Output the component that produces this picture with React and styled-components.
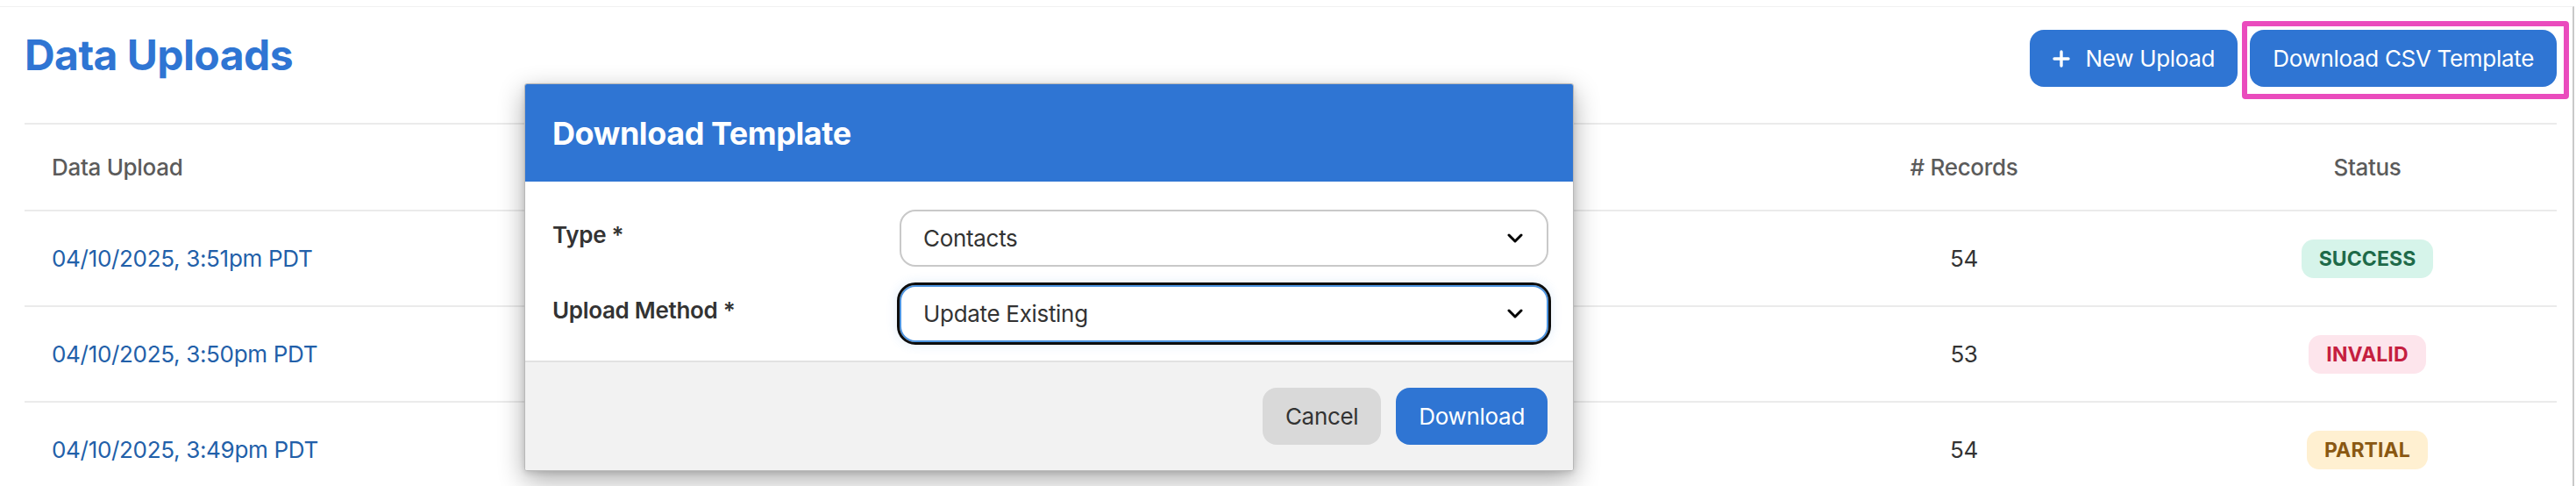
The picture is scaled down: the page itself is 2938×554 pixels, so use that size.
import React from "react";
import styled, { createGlobalStyle, css } from "styled-components";

const GlobalStyle = createGlobalStyle`
  html, body {
    margin: 0;
    padding: 0;
    background: #ffffff;
  }
  body {
    font-family: Inter, "Noto Sans", "Liberation Sans", sans-serif;
    -webkit-font-smoothing: antialiased;
  }
  *, *::before, *::after { box-sizing: border-box; }
`;

const BLUE = "#2f75d3";
const TRACK = "-0.012em";

const Page = styled.div`
  position: relative;
  width: 2938px;
  height: 554px;
  overflow: hidden;
`;

const Panel = styled.main`
  margin-top: 7px;
  width: 2936px;
  min-height: 547px;
  border-top: 1px solid #f1f1f1;
  border-right: 2px solid #c9c9c9;
  padding: 26px 18px 0 28px;
`;

const Header = styled.header`
  display: flex;
  align-items: center;
  justify-content: space-between;
  height: 65px;
`;

const Title = styled.h1`
  margin: 0 0 8px 0;
  font-size: 48px;
  line-height: 1;
  font-weight: 700;
  letter-spacing: ${TRACK};
  color: ${BLUE};
`;

const Actions = styled.div`
  display: flex;
  gap: 14px;
`;

const Button = styled.button`
  display: inline-flex;
  align-items: center;
  gap: 18px;
  height: 65px;
  padding: 0 26px;
  border: none;
  border-radius: 16px;
  font-family: inherit;
  font-size: 26px;
  font-weight: 400;
  letter-spacing: ${TRACK};
  cursor: pointer;
  background: ${(p) => (p.$variant === "secondary" ? "#d9d9d9" : BLUE)};
  color: ${(p) => (p.$variant === "secondary" ? "#333333" : "#ffffff")};
`;

const HighlightWrap = styled.div`
  position: relative;
  display: flex;
`;

const Highlight = styled.span`
  position: absolute;
  top: -10px;
  left: -9px;
  right: -14px;
  bottom: -14px;
  border: 6px solid #ea4bbd;
  border-radius: 4px;
  pointer-events: none;
`;

const Table = styled.div`
  margin-top: 41px;
`;

const COLS = "560px 700px 708px 488px 1fr";

const Row = styled.div`
  display: grid;
  grid-template-columns: ${COLS};
  align-items: center;
  border-top: 2px solid #ebebeb;
  height: ${(p) => (p.$head ? "99px" : "109px")};
`;

const Cell = styled.div`
  font-size: 26px;
  letter-spacing: ${TRACK};
  text-align: ${(p) => (p.$align === "left" ? "left" : "center")};
  padding-left: ${(p) => (p.$align === "left" ? "31px" : "0")};
  ${(p) =>
    p.$head
      ? css`
          font-weight: 500;
          color: #5b5b5b;
        `
      : css`
          font-weight: 400;
          color: #333333;
        `}
`;

const DateLink = styled.a`
  color: #2260a9;
  text-decoration: none;
`;

const badgeColors = {
  SUCCESS: { bg: "#d6f4ea", fg: "#1e6a49" },
  INVALID: { bg: "#fde5ec", fg: "#c51f40" },
  PARTIAL: { bg: "#fff0d1", fg: "#8a5812" },
};

const Badge = styled.span`
  display: inline-block;
  height: 44px;
  line-height: 44px;
  padding: 0 20px;
  border-radius: 14px;
  font-size: 23px;
  font-weight: 700;
  letter-spacing: 0.1px;
  background: ${(p) => badgeColors[p.$status].bg};
  color: ${(p) => badgeColors[p.$status].fg};
`;

const Dialog = styled.section`
  position: absolute;
  left: 598px;
  top: 95px;
  width: 1197px;
  background: #ffffff;
  border: 1px solid #b8b8b8;
  border-radius: 3px;
  box-shadow: 0 10px 30px rgba(0, 0, 0, 0.33), 0 2px 6px rgba(0, 0, 0, 0.12);
  overflow: hidden;
`;

const DialogHeader = styled.div`
  display: flex;
  align-items: center;
  height: 111px;
  padding: 0 31px;
  background: ${BLUE};
`;

const DialogTitle = styled.h2`
  margin: 0;
  font-size: 36px;
  font-weight: 700;
  letter-spacing: ${TRACK};
  color: #ffffff;
`;

const DialogBody = styled.div`
  display: flex;
  flex-direction: column;
  gap: 21px;
  padding: 32px 28px 21px 31px;
`;

const FieldRow = styled.div`
  display: grid;
  grid-template-columns: 396px 1fr;
  align-items: start;
`;

const Label = styled.label`
  padding-top: 13px;
  font-size: 26px;
  font-weight: 600;
  letter-spacing: ${TRACK};
  color: #333333;
`;

const Select = styled.div`
  display: flex;
  align-items: center;
  justify-content: space-between;
  height: 65px;
  padding: 0 27px 0 25px;
  border: 2px solid #c9c9c9;
  border-radius: 18px;
  font-size: 26px;
  letter-spacing: ${TRACK};
  color: #333333;
  background: #ffffff;
  ${(p) =>
    p.$focused &&
    css`
      border-color: #4d94e0;
      outline: 3px solid #0d0d0d;
      box-shadow: 0 0 12px 4px rgba(77, 148, 224, 0.14);
    `}
`;

const DialogFooter = styled.div`
  display: flex;
  justify-content: flex-end;
  gap: 17px;
  padding: 29px 29px 29px;
  border-top: 2px solid #e2e2e2;
  background: #f2f2f2;
`;

const Chevron = () => (
  <svg width="18" height="11" viewBox="0 0 18 11" fill="none">
    <path d="M2 2 L9 9 L16 2" stroke="#000" strokeWidth="3" strokeLinecap="round" strokeLinejoin="round" />
  </svg>
);

const PlusIcon = () => (
  <svg width="20" height="20" viewBox="0 0 20 20" fill="none">
    <path d="M10 2 V18 M2 10 H18" stroke="#fff" strokeWidth="3.4" strokeLinecap="round" />
  </svg>
);

const uploads = [
  { date: "04/10/2025, 3:51pm PDT", type: "Contacts", method: "Create New", records: 54, status: "SUCCESS" },
  { date: "04/10/2025, 3:50pm PDT", type: "Contacts", method: "Update Existing", records: 53, status: "INVALID" },
  { date: "04/10/2025, 3:49pm PDT", type: "Contacts", method: "Create New", records: 54, status: "PARTIAL" },
];

export default function App() {
  return (
    <Page>
      <GlobalStyle />
      <Panel>
        <Header>
          <Title>Data Uploads</Title>
          <Actions>
            <Button>
              <PlusIcon />
              New Upload
            </Button>
            <HighlightWrap>
              <Button>Download CSV Template</Button>
              <Highlight />
            </HighlightWrap>
          </Actions>
        </Header>

        <Table>
          <Row $head>
            <Cell $head $align="left">Data Upload</Cell>
            <Cell $head>Type</Cell>
            <Cell $head>Upload Method</Cell>
            <Cell $head># Records</Cell>
            <Cell $head>Status</Cell>
          </Row>
          {uploads.map((u) => (
            <Row key={u.date}>
              <Cell $align="left">
                <DateLink href="#">{u.date}</DateLink>
              </Cell>
              <Cell>{u.type}</Cell>
              <Cell>{u.method}</Cell>
              <Cell>{u.records}</Cell>
              <Cell>
                <Badge $status={u.status}>{u.status}</Badge>
              </Cell>
            </Row>
          ))}
        </Table>
      </Panel>

      <Dialog role="dialog" aria-label="Download Template">
        <DialogHeader>
          <DialogTitle>Download Template</DialogTitle>
        </DialogHeader>
        <DialogBody>
          <FieldRow>
            <Label>Type *</Label>
            <Select role="combobox">
              <span>Contacts</span>
              <Chevron />
            </Select>
          </FieldRow>
          <FieldRow>
            <Label>Upload Method *</Label>
            <Select role="combobox" $focused>
              <span>Update Existing</span>
              <Chevron />
            </Select>
          </FieldRow>
        </DialogBody>
        <DialogFooter>
          <Button $variant="secondary">Cancel</Button>
          <Button>Download</Button>
        </DialogFooter>
      </Dialog>
    </Page>
  );
}
